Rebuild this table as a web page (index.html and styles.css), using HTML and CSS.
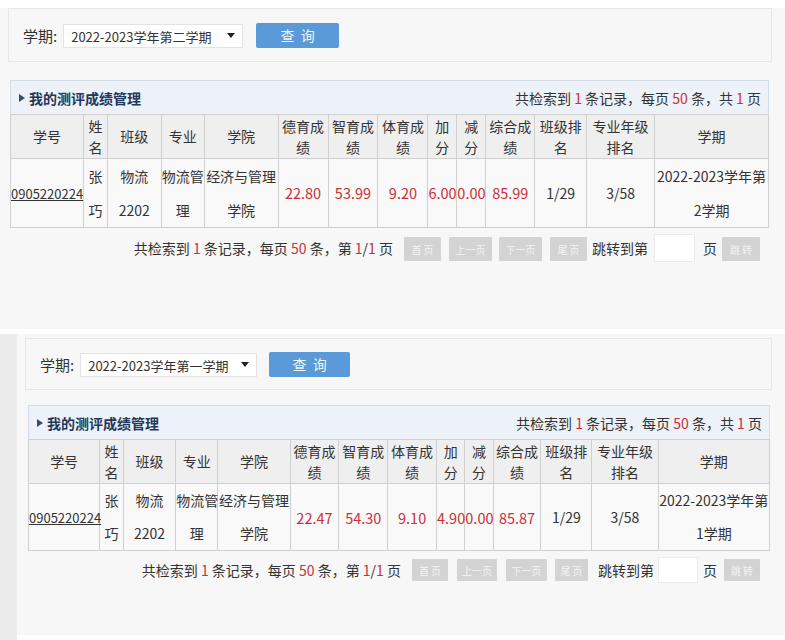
FILE: index.html
```html
<!DOCTYPE html>
<html lang="zh-CN">
<head>
<meta charset="utf-8">
<title>我的测评成绩管理</title>
<link rel="stylesheet" href="styles.css">
</head>
<body>
<div class="shot s1">
  <div class="search">
    <span class="label">学期:</span>
    <div class="select">2022-2023学年第二学期</div>
    <div class="btn-query">查&nbsp;&nbsp;询</div>
  </div>
  <div class="panel">
    <div class="bar">
      <span class="title">我的测评成绩管理</span>
      <span class="count">共检索到 <b class="red">1</b> 条记录，每页 <b class="red">50</b> 条，共 <b class="red">1</b> 页</span>
    </div>
    <table class="grid">
      <colgroup>
        <col class="c-id"><col class="c-name"><col class="c-class"><col class="c-major"><col class="c-college">
        <col class="c-g"><col class="c-g"><col class="c-g"><col class="c-s"><col class="c-s">
        <col class="c-total"><col class="c-rank"><col class="c-grank"><col class="c-term">
      </colgroup>
      <thead>
        <tr><th>学号</th><th>姓名</th><th>班级</th><th>专业</th><th>学院</th><th>德育成绩</th><th>智育成绩</th><th>体育成绩</th><th>加分</th><th>减分</th><th>综合成绩</th><th>班级排名</th><th>专业年级排名</th><th>学期</th></tr>
      </thead>
      <tbody>
        <tr><td><a href="#">0905220224</a></td><td>张<br>巧</td><td>物流<br>2202</td><td>物流管<br>理</td><td>经济与管理<br>学院</td><td class="n">22.80</td><td class="n">53.99</td><td class="n">9.20</td><td class="n">6.00</td><td class="n">0.00</td><td class="n">85.99</td><td>1/29</td><td>3/58</td><td>2022-2023学年第<br>2学期</td></tr>
      </tbody>
    </table>
    <div class="pager">
      <span class="ptext">共检索到 <span class="red">1</span> 条记录，每页 <span class="red">50</span> 条，第 <span class="red">1</span>/<span class="red">1</span> 页</span>
      <span class="pbtn b-first">首&nbsp;页</span>
      <span class="pbtn b-prev">上一页</span>
      <span class="pbtn b-next">下一页</span>
      <span class="pbtn b-last">尾&nbsp;页</span>
      <span class="jtext">跳转到第</span>
      <span class="jinput"></span>
      <span class="ptail">页</span>
      <span class="pbtn b-go">跳&nbsp;转</span>
    </div>
  </div>
</div>
<div class="gap"></div>
<div class="shot s2">
  <div class="strip"></div>
  <div class="content">
    <div class="search">
      <span class="label">学期:</span>
      <div class="select">2022-2023学年第一学期</div>
      <div class="btn-query">查&nbsp;&nbsp;询</div>
    </div>
    <div class="panel">
      <div class="bar">
        <span class="title">我的测评成绩管理</span>
        <span class="count">共检索到 <b class="red">1</b> 条记录，每页 <b class="red">50</b> 条，共 <b class="red">1</b> 页</span>
      </div>
      <table class="grid">
        <colgroup>
          <col class="c-id"><col class="c-name"><col class="c-class"><col class="c-major"><col class="c-college">
          <col class="c-g"><col class="c-g"><col class="c-g"><col class="c-s"><col class="c-s">
          <col class="c-total"><col class="c-rank"><col class="c-grank"><col class="c-term">
        </colgroup>
        <thead>
          <tr><th>学号</th><th>姓名</th><th>班级</th><th>专业</th><th>学院</th><th>德育成绩</th><th>智育成绩</th><th>体育成绩</th><th>加分</th><th>减分</th><th>综合成绩</th><th>班级排名</th><th>专业年级排名</th><th>学期</th></tr>
        </thead>
        <tbody>
          <tr><td><a href="#">0905220224</a></td><td>张<br>巧</td><td>物流<br>2202</td><td>物流管<br>理</td><td>经济与管理<br>学院</td><td class="n">22.47</td><td class="n">54.30</td><td class="n">9.10</td><td class="n">4.90</td><td class="n">0.00</td><td class="n">85.87</td><td>1/29</td><td>3/58</td><td>2022-2023学年第<br>1学期</td></tr>
        </tbody>
      </table>
      <div class="pager">
        <span class="ptext">共检索到 <span class="red">1</span> 条记录，每页 <span class="red">50</span> 条，第 <span class="red">1</span>/<span class="red">1</span> 页</span>
        <span class="pbtn b-first">首&nbsp;页</span>
        <span class="pbtn b-prev">上一页</span>
        <span class="pbtn b-next">下一页</span>
        <span class="pbtn b-last">尾&nbsp;页</span>
        <span class="jtext">跳转到第</span>
        <span class="jinput"></span>
        <span class="ptail">页</span>
        <span class="pbtn b-go">跳&nbsp;转</span>
      </div>
    </div>
  </div>
</div>
</body>
</html>
```

FILE: styles.css
```css
* { box-sizing: border-box; }

body {
  margin: 0;
  width: 785px;
  height: 640px;
  overflow: hidden;
  background: #ffffff;
  font-family: "Noto Sans CJK SC", "Noto Sans", sans-serif;
  font-size: 14px;
  color: #333333;
}

.shot { background: #f7f7f7; }

.s1 {
  height: 329px;
  border-top: 8px solid #ffffff;
}

.gap { height: 5px; background: #ffffff; }

.s2 {
  height: 306px;
  display: flex;
  background: #f7f7f7;
}

.strip {
  width: 17px;
  background: #ebebeb;
}

.s2 .content {
  flex: 1;
  padding: 4px 0 0 8px;
  border-bottom: 5px solid #ffffff;
}

/* search box */
.search {
  height: 54px;
  border: 1px solid #e7e7e7;
  background: #f7f7f7;
  display: flex;
  align-items: center;
  padding-left: 14px;
}
.s1 .search { margin: 0 13px 0 8px; }
.s2 .search { width: 747px; height: 52px; }

.label { margin-right: 6px; color: #333; font-size: 15px; }

.select {
  position: relative;
  width: 180px;
  height: 24px;
  background: #ffffff;
  border: 1px solid #e3e3e3;
  display: flex;
  align-items: center;
  padding-left: 7px;
  margin-top: 2px;
  color: #333;
  font-size: 13px;
}
.select::after {
  content: "";
  position: absolute;
  right: 7px;
  top: 8px;
  border-left: 4px solid transparent;
  border-right: 4px solid transparent;
  border-top: 5px solid #222222;
}
.s2 .select { width: 177px; }

.btn-query {
  margin-left: 13px;
  width: 83px;
  height: 25px;
  background: #5b9ad8;
  color: #eef4fb;
  border-radius: 2px;
  display: flex;
  align-items: center;
  justify-content: center;
  font-size: 14px;
}
.s2 .btn-query { margin-left: 12px; width: 81px; }

/* panel */
.panel { margin-top: 18px; margin-left: 10px; width: 759px; }
.s2 .panel { margin-top: 15px; margin-left: 3px; width: 742px; }

.bar {
  height: 34px;
  border: 1px solid #d3dbe6;
  border-bottom: none;
  background: #edf1f8;
  display: flex;
  align-items: center;
  justify-content: space-between;
  padding: 0 7px 0 8px;
}
.title {
  display: flex;
  align-items: center;
  font-weight: bold;
  color: #22375a;
}
.title::before {
  content: "";
  border-top: 4px solid transparent;
  border-bottom: 4px solid transparent;
  border-left: 6px solid #3b4c6b;
  margin-right: 4px;
}
.count b { font-weight: normal; }
.red { color: #c9303a; }

/* grid */
.grid {
  width: 100%;
  border-collapse: collapse;
  table-layout: fixed;
}
.c-id { width: 9.62%; }
.c-name { width: 3.16%; }
.c-class { width: 7.11%; }
.c-major { width: 5.67%; }
.c-college { width: 9.75%; }
.c-g { width: 6.59%; }
.c-s { width: 3.82%; }
.c-total { width: 6.46%; }
.c-rank { width: 6.85%; }
.c-grank { width: 8.96%; }
.c-term { width: 15.02%; }

.grid th, .grid td {
  border: 1px solid #d0d0d0;
  padding: 0;
  text-align: center;
  font-weight: normal;
  vertical-align: middle;
}
.grid th {
  background: #efefef;
  line-height: 21px;
  height: 44px;
}
.grid td {
  background: #f9f9f9;
  line-height: 34px;
  height: 68px;
  white-space: nowrap;
  overflow: visible;
}
.s2 .grid td { line-height: 33px; height: 66px; }
.grid td.n { color: #c9303a; font-size: 14.5px; }
.grid a {
  color: #333333;
  text-decoration: underline;
  font-size: 13px;
}

/* pager */
.pager {
  display: flex;
  justify-content: flex-end;
  align-items: center;
  margin-top: 6px;
  padding-right: 9px;
  height: 28px;
}
.pbtn {
  height: 24px;
  background: #d3d3d3;
  color: #f3f3f3;
  font-size: 10px;
  display: flex;
  align-items: center;
  justify-content: center;
  border-radius: 1px;
  margin-top: 2px;
}
.b-first { margin-left: 11px; width: 37px; }
.b-prev { margin-left: 8px; width: 43px; }
.b-next { margin-left: 7px; width: 43px; }
.b-last { margin-left: 8px; width: 37px; }
.jtext { margin-left: 5px; }
.jinput {
  margin-left: 6px;
  width: 41px;
  height: 28px;
  background: #ffffff;
  border: 1px solid #ececec;
}
.ptail { margin-left: 8px; }
.b-go { margin-left: 5px; width: 38px; }

.s2 .pager { padding-right: 10px; margin-top: 7px; height: 24px; }
.s2 .pbtn { height: 22px; margin-top: 0; }
.s2 .b-first { width: 36px; }
.s2 .b-prev { margin-left: 9px; width: 40px; }
.s2 .b-next { margin-left: 9px; width: 41px; }
.s2 .b-last { margin-left: 8px; width: 33px; }
.s2 .jtext { margin-left: 10px; }
.s2 .jinput { margin-left: 4px; width: 40px; height: 26px; }
.s2 .ptail { margin-left: 5px; }
.s2 .b-go { margin-left: 7px; width: 36px; }
```
